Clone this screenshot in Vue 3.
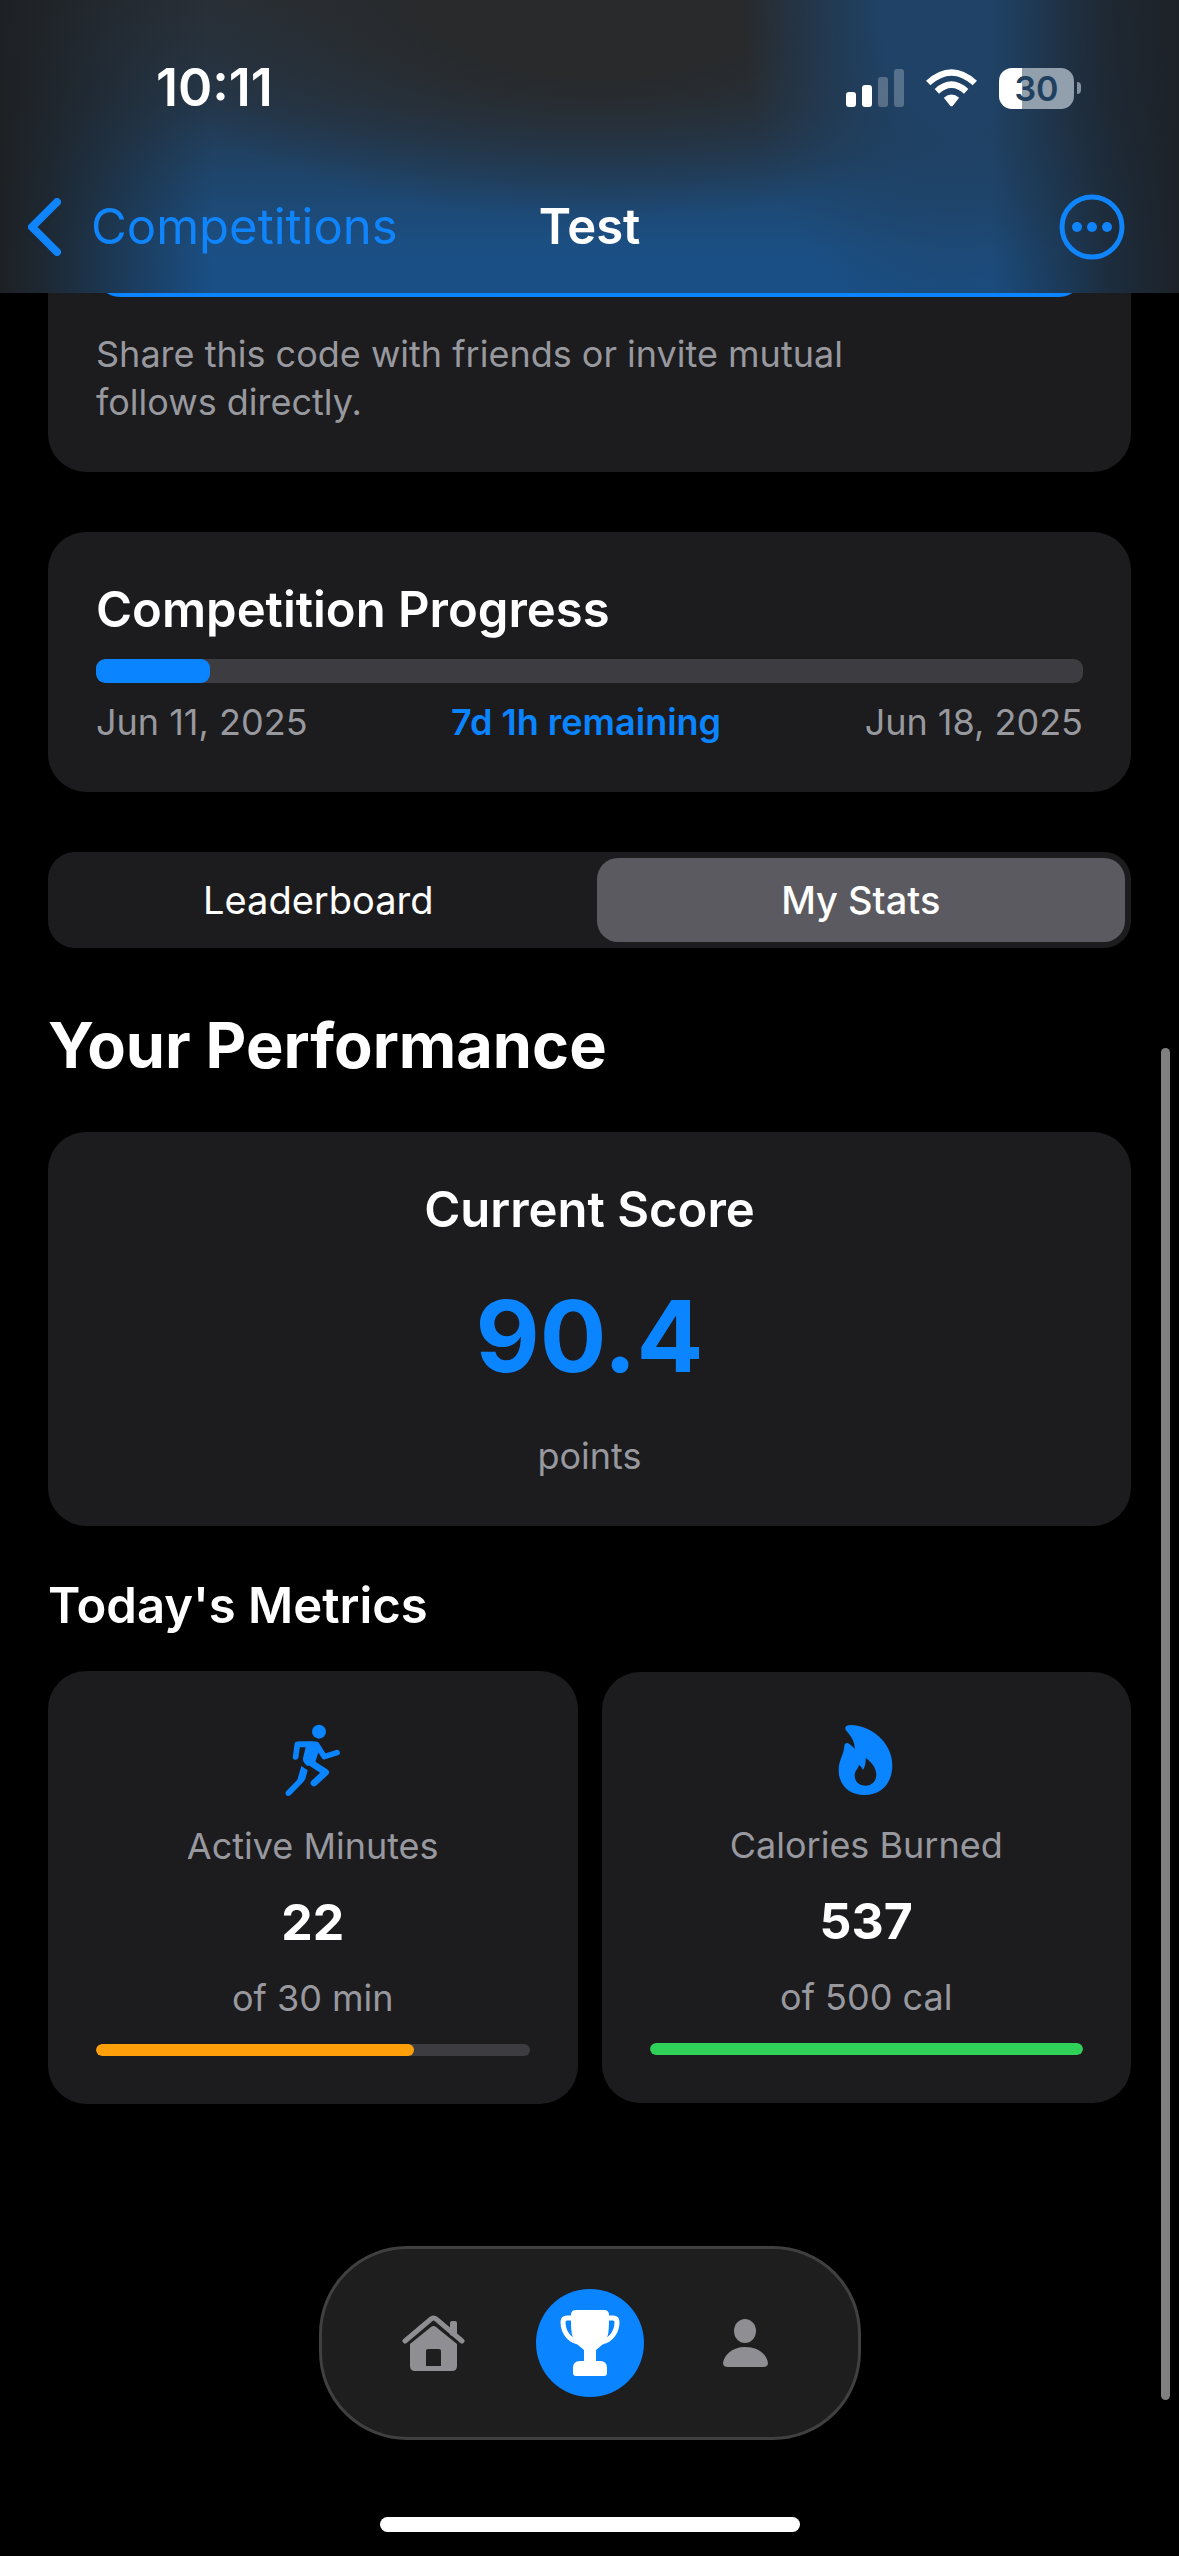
<script setup>
import { ref } from 'vue'

const tabs = ['Leaderboard', 'My Stats']
const activeTab = ref('My Stats')

const elapsed = 11.5

const metrics = [
  { id: 'run', label: 'Active Minutes', value: 22, goal: 30, unit: 'min', color: '#ff9f0a' },
  { id: 'flame', label: 'Calories Burned', value: 537, goal: 500, unit: 'cal', color: '#30d158' }
]

const percent = (m) => Math.min(100, (m.value / m.goal) * 100)
</script>

<template>
  <div class="page">
    <header class="header">
      <div class="status">
        <span class="time">10:11</span>
        <div class="indicators">
          <svg class="signal" viewBox="0 0 58 38" aria-hidden="true">
            <rect x="0" y="23" width="10" height="15" rx="3" />
            <rect x="16" y="16" width="10" height="22" rx="3" />
            <rect x="32" y="8" width="10" height="30" rx="3" class="dim" />
            <rect x="48" y="0" width="10" height="38" rx="3" class="dim" />
          </svg>
          <svg class="wifi" viewBox="318 56 152 114" aria-hidden="true">
            <path d="M324 98Q394 35 464 98M350 123Q394 83 438 123" class="arc" />
            <path d="M371 142Q394 123 417 142L398 166Q394 170 390 166Z" />
          </svg>
          <div class="battery-wrap">
            <span class="battery">30</span>
            <span class="nub"></span>
          </div>
        </div>
      </div>
      <nav class="navbar">
        <a class="back" href="#">
          <svg viewBox="0 0 33 58" aria-hidden="true"><path d="M29 4L4 29L29 54" /></svg>
          <span>Competitions</span>
        </a>
        <h1 class="title">Test</h1>
        <button class="more" type="button" aria-label="More options">
          <svg viewBox="0 0 66 66" aria-hidden="true">
            <circle cx="33" cy="33" r="30" class="ring" />
            <circle cx="18" cy="33" r="5" />
            <circle cx="33" cy="33" r="5" />
            <circle cx="48" cy="33" r="5" />
          </svg>
        </button>
      </nav>
    </header>

    <main class="content">
      <section class="card invite">
        <div class="code-box"></div>
        <p class="note">Share this code with friends or invite mutual follows directly.</p>
      </section>

      <section class="card progress-card">
        <h2 class="subtitle">Competition Progress</h2>
        <div class="bar thick" role="progressbar" :aria-valuenow="elapsed" aria-label="Competition progress">
          <div class="fill blue" :style="{ width: elapsed + '%' }"></div>
        </div>
        <div class="dates">
          <span>Jun 11, 2025</span>
          <strong>7d 1h remaining</strong>
          <span>Jun 18, 2025</span>
        </div>
      </section>

      <div class="segmented" role="tablist">
        <button
          v-for="tab in tabs"
          :key="tab"
          type="button"
          role="tab"
          :aria-selected="activeTab === tab"
          :class="['segment', { selected: activeTab === tab }]"
          @click="activeTab = tab"
        >{{ tab }}</button>
      </div>

      <h2 class="heading">Your Performance</h2>

      <section class="card score">
        <h3 class="subtitle">Current Score</h3>
        <p class="points">90.4</p>
        <p class="caption">points</p>
      </section>

      <h3 class="subtitle metrics-title">Today's Metrics</h3>

      <div class="metrics">
        <section v-for="m in metrics" :key="m.id" class="card metric">
          <svg v-if="m.id === 'run'" class="icon-run" viewBox="48 27 162 243" aria-hidden="true">
            <circle cx="147" cy="65" r="21" />
            <path d="M77 141L82 103H122" class="limb" />
            <path d="M84 95L132 94Q143 94 148 104L150 112L136 156L138 160L112 168Q98 158 99 144L107 112Z" />
            <path d="M140 104L163 140L201 128" class="limb" />
            <path d="M110 150L167 187L132 219" class="limb thick-limb" />
            <path d="M94 168L113 181L107 203Q105 211 99 217L62 255Q54 261 48 255Q44 249 50 242L82 209Z" />
          </svg>
          <svg v-else class="icon-flame" viewBox="58 30 162 237" aria-hidden="true">
            <path
              fill-rule="evenodd"
              d="M93 45C150 45 218 95 218 165C218 220 185 255 135 255C88 255 57 225 57 180C57 150 72 135 74 108C75 98 84 97 90 103C97 109 102 112 105 117C106 95 94 78 80 62C72 52 80 45 93 45ZM138 143C158 158 170 175 170 194C170 214 156 227 137 227C118 227 105 214 105 196C105 182 115 178 118 165C122 166 127 174 130 180C136 170 139 158 138 143Z"
            />
          </svg>
          <p class="caption">{{ m.label }}</p>
          <p class="value">{{ m.value }}</p>
          <p class="caption">of {{ m.goal }} {{ m.unit }}</p>
          <div class="bar" role="progressbar" :aria-valuenow="percent(m)" :aria-label="m.label">
            <div class="fill" :style="{ width: percent(m) + '%', background: m.color }"></div>
          </div>
        </section>
      </div>
    </main>

    <footer class="footer">
      <nav class="tabbar">
        <button class="tab" type="button" aria-label="Home">
          <svg class="icon-home" viewBox="0 0 63 56" aria-hidden="true">
            <path d="M48 20V8Q48 6 50 6H53Q55 6 55 8V23Z" />
            <path d="M3 26L29 4Q32 2 34 4L60 26" class="roof" />
            <path
              fill-rule="evenodd"
              d="M8 29L29 12Q32 10 34 12L55 29V51Q55 56 50 56H13Q8 56 8 51ZM26 34Q24 34 24 36V51H39V36Q39 34 37 34Z"
            />
          </svg>
        </button>
        <button class="tab current" type="button" aria-label="Competitions">
          <svg class="icon-trophy" viewBox="0 0 60 66" aria-hidden="true">
            <path d="M13 8H7Q3 8 3 12C3 22 9 30 18 32M47 8H53Q57 8 57 12C57 22 51 30 42 32" class="handle" />
            <path
              d="M16 0H44Q49 0 49 5C49 20 49 27 44 33Q41 36 36 40V51H40Q47 51 47 58V63Q47 66 44 66H16Q13 66 13 63V58Q13 51 20 51H24V40Q19 36 16 33C11 27 11 20 11 5Q11 0 16 0Z"
            />
          </svg>
        </button>
        <button class="tab" type="button" aria-label="Profile">
          <svg class="icon-person" viewBox="0 0 45 48" aria-hidden="true">
            <ellipse cx="22" cy="12" rx="11" ry="12" />
            <path d="M5 48Q0 48 0 44C1 36 9 28 22 28C36 28 44 36 45 44Q45 48 40 48Z" />
          </svg>
        </button>
      </nav>
      <div class="home-indicator"></div>
    </footer>

    <div class="scroll-thumb"></div>
  </div>
</template>

<style>
body {
  background: #000;
}
</style>

<style scoped>
.page {
  position: relative;
  display: flex;
  flex-direction: column;
  min-height: 100vh;
  background: #000;
  color: #fff;
  font-family: Inter, "Liberation Sans", sans-serif;
}

h1, h2, h3, p {
  margin: 0;
}

button {
  padding: 0;
  border: 0;
  background: none;
  color: inherit;
  font: inherit;
}

svg {
  display: block;
  fill: currentColor;
}

/* Header */
.header {
  position: relative;
  z-index: 1;
  margin-bottom: -95px;
  background:
    linear-gradient(90deg, #1e2124 0%, rgba(30, 34, 38, 0.85) 4%, rgba(30, 35, 40, 0) 18%),
    linear-gradient(270deg, #1d2228 0%, rgba(29, 36, 44, 0.8) 6%, rgba(30, 38, 48, 0) 16%),
    radial-gradient(ellipse 18% 120% at 81% 0%, #1f4266 35%, rgba(31, 66, 102, 0) 100%),
    radial-gradient(ellipse 42% 75% at 51% 0%, #282a2c 35%, rgba(40, 42, 44, 0) 100%),
    linear-gradient(180deg, #29313a 0%, #24384d 35%, #1e456b 60%, #1b4f84 85%, #194f86 100%);
}

.status {
  display: flex;
  align-items: center;
  justify-content: space-between;
  height: 176px;
  padding: 0 98px 0 156px;
}

.time {
  font-size: 52px;
  font-weight: 600;
  line-height: 60px;
}

.indicators {
  display: flex;
  align-items: center;
  gap: 22px;
}

.signal {
  width: 58px;
  height: 38px;
}

.dim {
  opacity: 0.25;
}

.wifi {
  width: 51px;
  height: 38px;
}

.arc {
  fill: none;
  stroke: currentColor;
  stroke-width: 19;
}

.battery-wrap {
  display: flex;
  align-items: center;
  gap: 3px;
}

.battery {
  width: 75px;
  border-radius: 13px;
  background: linear-gradient(90deg, #fff 31%, #929fad 31%);
  color: #21405f;
  font-size: 34px;
  font-weight: 600;
  line-height: 41px;
  text-align: center;
}

.nub {
  width: 4px;
  height: 12px;
  border-radius: 0 4px 4px 0;
  background: #8592a0;
}

.navbar {
  display: grid;
  grid-template-columns: 1fr auto 1fr;
  align-items: center;
  height: 101px;
  padding: 0 54px 16px 28px;
}

.back {
  display: flex;
  align-items: center;
  gap: 30px;
  color: #0f84fb;
  font-size: 49px;
  line-height: 60px;
  text-decoration: none;
}

.back svg {
  width: 33px;
  height: 58px;
  fill: none;
  stroke: currentColor;
  stroke-width: 8;
  stroke-linecap: round;
  stroke-linejoin: round;
}

.title {
  padding-left: 26px;
  font-size: 49px;
  font-weight: 600;
  line-height: 60px;
}

.more {
  justify-self: end;
  color: #0f84fb;
}

.more svg {
  width: 66px;
  height: 66px;
}

.ring {
  fill: none;
  stroke: currentColor;
  stroke-width: 5;
}

/* Content */
.content {
  padding: 0 48px;
}

.card {
  border-radius: 38px;
  background: #1c1c1e;
}

.invite {
  padding: 0 48px 46px;
}

.code-box {
  height: 99px;
  border-radius: 24px;
  background: #0a84ff;
}

.note {
  max-width: 800px;
  margin-top: 33px;
  color: #98989f;
  font-size: 36px;
  line-height: 48px;
}

.subtitle {
  font-size: 49px;
  font-weight: 600;
  line-height: 60px;
}

.progress-card {
  margin-top: 60px;
  padding: 48px 48px 46px;
}

.bar {
  width: 100%;
  height: 12px;
  border-radius: 6px;
  background: #3d3c41;
  overflow: hidden;
}

.bar.thick {
  height: 24px;
  margin: 19px 0 15px;
  border-radius: 9px;
}

.fill {
  height: 100%;
  border-radius: inherit;
}

.fill.blue {
  background: #0a84ff;
}

.dates {
  display: flex;
  justify-content: space-between;
  color: #98989f;
  font-size: 36px;
  line-height: 48px;
}

.dates strong {
  color: #0a84ff;
  font-weight: 600;
}

.segmented {
  display: grid;
  grid-template-columns: 1fr 1fr;
  column-gap: 14px;
  margin-top: 60px;
  padding: 6px;
  border-radius: 27px;
  background: #1c1c1f;
}

.segment {
  height: 84px;
  border-radius: 21px;
  font-size: 38px;
  line-height: 48px;
}

.segment.selected {
  background: #5b5a60;
  font-weight: 500;
}

.heading {
  margin: 58px 0 48px;
  font-size: 63px;
  font-weight: 700;
  line-height: 78px;
}

.score {
  display: flex;
  flex-direction: column;
  align-items: center;
  gap: 36px;
  padding: 48px 48px 46px;
}

.points {
  color: #0a84ff;
  font-size: 99px;
  font-weight: 700;
  line-height: 120px;
}

.caption {
  color: #98989f;
  font-size: 36px;
  line-height: 48px;
}

.metrics-title {
  margin: 50px 0 35px;
}

.metrics {
  display: flex;
  align-items: center;
  gap: 24px;
}

.metric {
  display: flex;
  flex: 1;
  flex-direction: column;
  align-items: center;
  gap: 22px;
  padding: 48px;
}

.icon-run,
.icon-flame {
  width: 54px;
  color: #0a84ff;
  overflow: visible;
}

.icon-run {
  height: 81px;
}

.icon-flame {
  height: 79px;
}

.limb {
  fill: none;
  stroke: currentColor;
  stroke-width: 17;
  stroke-linecap: round;
  stroke-linejoin: round;
}

.thick-limb {
  stroke-width: 20;
}

.value {
  font-size: 50px;
  font-weight: 700;
  line-height: 60px;
}

/* Tab bar */
.footer {
  display: flex;
  flex-direction: column;
  align-items: center;
  gap: 77px;
  margin-top: auto;
  padding: 48px 0 24px;
}

.tabbar {
  display: flex;
  gap: 48px;
  padding: 40px 58px;
  border: 3px solid #404040;
  border-radius: 88px;
  background: #1e1e1e;
}

.tab {
  display: grid;
  place-items: center;
  width: 108px;
  height: 108px;
  border-radius: 50%;
  color: #8e8e93;
}

.tab.current {
  background: #0a84ff;
  color: #fff;
}

.icon-home {
  width: 63px;
  height: 56px;
}

.roof,
.handle {
  fill: none;
  stroke: currentColor;
  stroke-width: 5;
  stroke-linecap: round;
}

.icon-trophy {
  width: 60px;
  height: 66px;
}

.icon-person {
  width: 45px;
  height: 48px;
}

.home-indicator {
  width: 420px;
  height: 15px;
  border-radius: 8px;
  background: #fff;
}

.scroll-thumb {
  position: absolute;
  top: 41%;
  right: 9px;
  width: 9px;
  height: 52.9%;
  border-radius: 5px;
  background: #808080;
}
</style>
